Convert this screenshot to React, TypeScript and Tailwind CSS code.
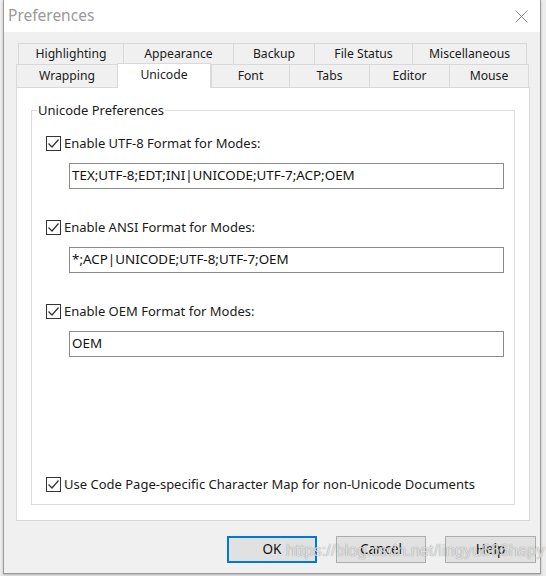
import React from "react";

const UI = { fontFamily: '"Noto Sans", "Open Sans", sans-serif' };

function Check() {
  return (
    <span className="w-[15px] h-[15px] border border-[#333333] bg-white flex items-center justify-center shrink-0">
      <svg width="13" height="13" viewBox="0 0 13 13">
        <path d="M1.5 6.5 L5 10 L11.5 2.5" fill="none" stroke="#333333" strokeWidth="1.2" />
      </svg>
    </span>
  );
}

function CheckRow({ label }: { label: string }) {
  return (
    <div className="h-[20px] flex items-center ml-[14px] gap-[3px] text-[13px] text-[#1a1a1a] leading-none">
      <Check />
      <span>{label}</span>
    </div>
  );
}

function Field({ value, mt }: { value: string; mt: string }) {
  return (
    <div
      className={`${mt} ml-[37px] w-[435px] h-[26px] border border-[#8a8a8a] bg-white flex items-center pl-[2px] text-[13.4px] text-[#111111] leading-none`}
    >
      {value}
    </div>
  );
}

function Tab({ label, w, last }: { label: string; w: string; last?: boolean }) {
  return (
    <div
      className={`${w} h-full border-t border-l ${last ? "border-r" : ""} border-[#d9d9d9] bg-[#f0f0f0] flex items-center justify-center text-[12.2px] text-[#1a1a1a] leading-none`}
    >
      {label}
    </div>
  );
}

export default function App() {
  return (
    <div className="w-[546px] h-[576px] bg-[#ececec] overflow-hidden relative" style={UI}>
      <div className="ml-[3px] w-[538px] h-[574px] border-x border-b border-[#9a9a9a] flex flex-col shadow-[0_1px_2px_rgba(0,0,0,0.25)]">
        {/* title bar */}
        <div className="h-[32px] bg-white flex items-center justify-between pl-[4px] pr-[12px]">
          <span className="text-[15.5px] text-[#9a9a9a] leading-none">Preferences</span>
          <svg width="13" height="13" viewBox="0 0 13 13">
            <path d="M0.5 0.5 L12.5 12.5 M12.5 0.5 L0.5 12.5" stroke="#8a8a8a" strokeWidth="1" fill="none" />
          </svg>
        </div>
        {/* body */}
        <div className="flex-1 bg-[#f0f0f0] pl-[12px] pt-[11px] flex flex-col">
          <div className="w-[514px]">
            <div className="h-[21px] flex ml-[2px]">
              <Tab label="Highlighting" w="w-[105px]" />
              <Tab label="Appearance" w="w-[110px]" />
              <Tab label="Backup" w="w-[81px]" />
              <Tab label="File Status" w="w-[98px]" />
              <Tab label="Miscellaneous" w="w-[115px]" last />
            </div>
            <div className="h-[23px] flex items-end">
              <Tab label="Wrapping" w="w-[101px]" />
              <div className="relative z-10 w-[94px] h-[25px] -mb-[1px] border-t border-x border-[#d9d9d9] bg-white flex items-start justify-center pt-[5px] text-[12.2px] text-[#1a1a1a] leading-none">
                Unicode
              </div>
              <div className="h-full flex">
                <Tab label="Font" w="w-[78px]" />
                <Tab label="Tabs" w="w-[80px]" />
                <Tab label="Editor" w="w-[80px]" />
                <Tab label="Mouse" w="w-[80px]" last />
              </div>
            </div>
            {/* panel */}
            <div className="h-[434px] border border-[#d9d9d9] bg-white pt-[22px] pl-[14px]">
              <div className="relative w-[484px] h-[395px] border border-[#dcdcdc] flex flex-col pt-[22px] pb-[10px]">
                <span className="absolute left-[5px] -top-[10px] bg-white px-[1px] text-[13px] text-[#1a1a1a] leading-[18px]">
                  Unicode Preferences
                </span>
                <CheckRow label="Enable UTF-8 Format for Modes:" />
                <Field value="TEX;UTF-8;EDT;INI|UNICODE;UTF-7;ACP;OEM" mt="mt-[10px]" />
                <div className="mt-[28px]">
                  <CheckRow label="Enable ANSI Format for Modes:" />
                </div>
                <Field value="*;ACP|UNICODE;UTF-8;UTF-7;OEM" mt="mt-[10px]" />
                <div className="mt-[28px]">
                  <CheckRow label="Enable OEM Format for Modes:" />
                </div>
                <Field value="OEM" mt="mt-[10px]" />
                <div className="mt-auto">
                  <CheckRow label="Use Code Page-specific Character Map for non-Unicode Documents" />
                </div>
              </div>
            </div>
          </div>
          {/* buttons */}
          <div className="relative w-[520px] mt-[15px] flex justify-end gap-[19px]">
            <button className="w-[90px] h-[27px] border-2 border-[#0078d7] bg-[#e1e1e1] text-[13.5px] text-[#111111] leading-none">
              OK
            </button>
            <button className="w-[90px] h-[27px] border border-[#adadad] bg-[#e1e1e1] text-[13.5px] text-[#111111] leading-none">
              Cancel
            </button>
            <button className="w-[91px] h-[27px] border border-[#adadad] bg-[#e1e1e1] text-[13.5px] text-[#111111] leading-none">
              Help
            </button>
            <span
              className="absolute left-[270px] top-[6px] text-[16.5px] leading-none text-white/75 whitespace-nowrap [text-shadow:0_0_1px_rgba(0,0,0,0.5)]"
              style={{ fontFamily: '"Liberation Sans", Arial, sans-serif' }}
            >
              https://blog.csdn.net/lingyu666hapy
            </span>
          </div>
        </div>
      </div>
    </div>
  );
}
